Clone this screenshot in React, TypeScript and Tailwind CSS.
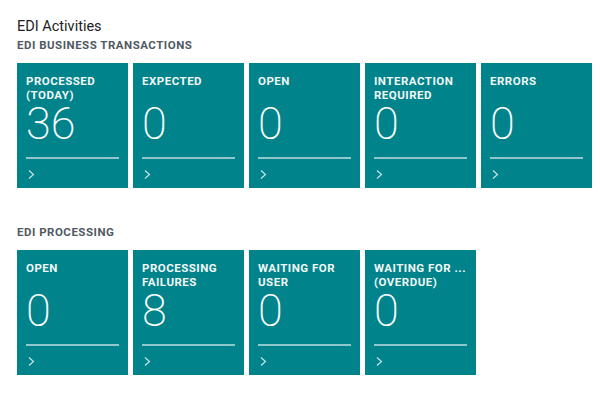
interface Cue {
  label: string[]
  value: number
}

const business: Cue[] = [
  { label: ['PROCESSED', '(TODAY)'], value: 36 },
  { label: ['EXPECTED'], value: 0 },
  { label: ['OPEN'], value: 0 },
  { label: ['INTERACTION', 'REQUIRED'], value: 0 },
  { label: ['ERRORS'], value: 0 },
]

const processing: Cue[] = [
  { label: ['OPEN'], value: 0 },
  { label: ['PROCESSING', 'FAILURES'], value: 8 },
  { label: ['WAITING FOR', 'USER'], value: 0 },
  { label: ['WAITING FOR ...', '(OVERDUE)'], value: 0 },
]

function Tile({ cue }: { cue: Cue }) {
  return (
    <div className="flex h-[125px] w-[111px] shrink-0 flex-col bg-[#00838a] px-[9px] pt-[11px] text-white">
      <div className="h-[28px] text-[11.5px] font-bold leading-[14px] tracking-[0.5px] text-[#f2f7f7]">
        {cue.label.map((l) => (
          <div key={l}>{l}</div>
        ))}
      </div>
      <div className="h-[55px] text-[45px] font-extralight leading-[43px]">{cue.value}</div>
      <div className="h-[2px] bg-[#8fc7ca]" />
      <svg className="mt-[11px] ml-[2px]" width="7" height="9" viewBox="0 0 7 9">
        <polyline points="1,0.5 5.5,4.5 1,8.5" fill="none" stroke="#c7e3e4" strokeWidth="1.2" />
      </svg>
    </div>
  )
}

function Section({ title, cues }: { title: string; cues: Cue[] }) {
  return (
    <div>
      <h3 className="text-[11.5px] font-bold leading-[16px] tracking-[0.5px] text-[#505a64]">{title}</h3>
      <div className="mt-[10px] flex gap-[5px]">
        {cues.map((c, i) => (
          <Tile key={i} cue={c} />
        ))}
      </div>
    </div>
  )
}

export default function App() {
  return (
    <div className="h-[400px] w-[600px] overflow-hidden bg-white px-[17px] pt-[17px] font-['Roboto',sans-serif]">
      <h2 className="text-[14.5px] leading-[20px] text-[#222]">EDI Activities</h2>
      <Section title="EDI BUSINESS TRANSACTIONS" cues={business} />
      <div className="mt-[36px]">
        <Section title="EDI PROCESSING" cues={processing} />
      </div>
    </div>
  )
}
